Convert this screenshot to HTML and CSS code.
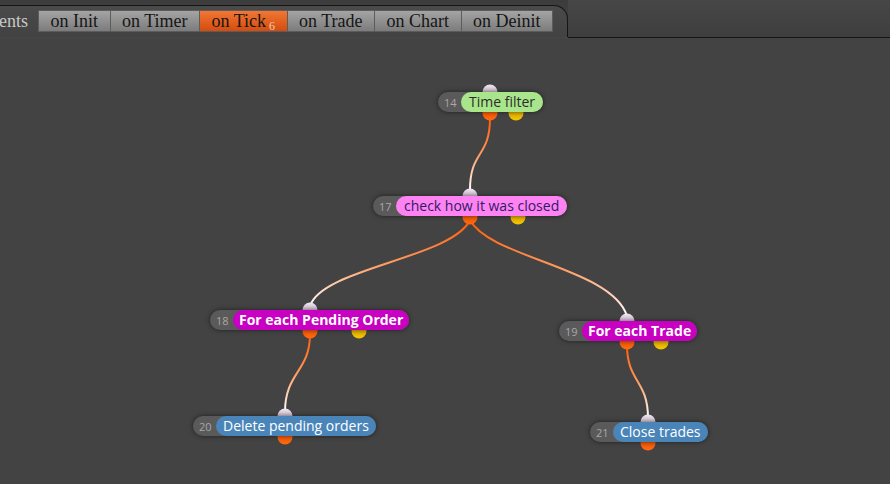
FILE: index.html
```html
<!DOCTYPE html>
<html>
	<head>
		<meta charset="utf-8">
		<title>Events</title>
		<link rel="stylesheet" href="styles.css">
	</head>
	<body>
		<div class="topbar">
			<div class="panel">
				<span class="caption">Events</span>
				<div class="tabs">
					<span class="tab">on Init</span>
					<span class="tab">on Timer</span>
					<span class="tab active">on Tick<sub>6</sub></span>
					<span class="tab">on Trade</span>
					<span class="tab">on Chart</span>
					<span class="tab">on Deinit</span>
				</div>
			</div>
			<div class="filler"></div>
		</div>
		<div class="canvas">
			<svg class="wires" width="890" height="446" viewBox="0 38 890 446">
				<defs>
					<linearGradient id="w1" gradientUnits="userSpaceOnUse" x1="0" y1="118" x2="0" y2="190">
						<stop offset="0" stop-color="#ff5a00"/>
						<stop offset="0.5" stop-color="#ff9a60"/>
						<stop offset="1" stop-color="#ffffff"/>
					</linearGradient>
					<linearGradient id="w2" gradientUnits="userSpaceOnUse" x1="0" y1="220" x2="0" y2="306">
						<stop offset="0" stop-color="#ff5a00"/>
						<stop offset="0.5" stop-color="#ff9a60"/>
						<stop offset="1" stop-color="#ffffff"/>
					</linearGradient>
					<linearGradient id="w3" gradientUnits="userSpaceOnUse" x1="0" y1="220" x2="0" y2="316">
						<stop offset="0" stop-color="#ff5a00"/>
						<stop offset="0.5" stop-color="#ff9a60"/>
						<stop offset="1" stop-color="#ffffff"/>
					</linearGradient>
					<linearGradient id="w4" gradientUnits="userSpaceOnUse" x1="0" y1="334" x2="0" y2="412">
						<stop offset="0" stop-color="#ff5a00"/>
						<stop offset="0.5" stop-color="#ff9a60"/>
						<stop offset="1" stop-color="#ffffff"/>
					</linearGradient>
					<linearGradient id="w5" gradientUnits="userSpaceOnUse" x1="0" y1="345" x2="0" y2="418">
						<stop offset="0" stop-color="#ff5a00"/>
						<stop offset="0.5" stop-color="#ff9a60"/>
						<stop offset="1" stop-color="#ffffff"/>
					</linearGradient>
					<linearGradient id="pin-in" x1="0" y1="0" x2="0" y2="1">
						<stop offset="0" stop-color="#f2e6f2"/>
						<stop offset="1" stop-color="#a898a8"/>
					</linearGradient>
					<linearGradient id="pin-out" x1="0" y1="0" x2="0" y2="1">
						<stop offset="0" stop-color="#e04a00"/>
						<stop offset="1" stop-color="#ff6a10"/>
					</linearGradient>
					<linearGradient id="pin-alt" x1="0" y1="0" x2="0" y2="1">
						<stop offset="0" stop-color="#c89000"/>
						<stop offset="1" stop-color="#f4c800"/>
					</linearGradient>
				</defs>

				<!-- connections -->
				<g fill="none" stroke-width="2">
					<path d="M490 118 C490 158 470 150 470 190" stroke="url(#w1)"/>
					<path d="M470 220 C452 258 322 268 310 306" stroke="url(#w2)"/>
					<path d="M470 220 C490 258 612 268 627 316" stroke="url(#w3)"/>
					<path d="M310 334 C310 372 285 372 285 412" stroke="url(#w4)"/>
					<path d="M627 345 C627 382 648 380 648 418" stroke="url(#w5)"/>
				</g>

				<!-- pins -->
				<circle cx="490" cy="92" r="7.5" fill="url(#pin-in)"/>
				<circle cx="490" cy="113" r="7.5" fill="url(#pin-out)"/>
				<circle cx="516" cy="113" r="7.5" fill="url(#pin-alt)"/>

				<circle cx="470" cy="196" r="7.5" fill="url(#pin-in)"/>
				<circle cx="470" cy="217" r="7.5" fill="url(#pin-out)"/>
				<circle cx="518" cy="217" r="7.5" fill="url(#pin-alt)"/>

				<circle cx="310" cy="310" r="7.5" fill="url(#pin-in)"/>
				<circle cx="310" cy="331" r="7.5" fill="url(#pin-out)"/>
				<circle cx="359" cy="331" r="7.5" fill="url(#pin-alt)"/>

				<circle cx="627" cy="321" r="7.5" fill="url(#pin-in)"/>
				<circle cx="627" cy="342" r="7.5" fill="url(#pin-out)"/>
				<circle cx="661" cy="342" r="7.5" fill="url(#pin-alt)"/>

				<circle cx="285" cy="416" r="7.5" fill="url(#pin-in)"/>
				<circle cx="285" cy="437" r="7.5" fill="url(#pin-out)"/>

				<circle cx="648" cy="422" r="7.5" fill="url(#pin-in)"/>
				<circle cx="648" cy="443" r="7.5" fill="url(#pin-out)"/>
			</svg>

			<div class="node n14"><span class="num">14</span><span class="label green">Time filter</span></div>
			<div class="node n17"><span class="num">17</span><span class="label pink">check how it was closed</span></div>
			<div class="node n18"><span class="num">18</span><span class="label loop">For each Pending Order</span></div>
			<div class="node n19"><span class="num">19</span><span class="label loop">For each Trade</span></div>
			<div class="node n20"><span class="num">20</span><span class="label action">Delete pending orders</span></div>
			<div class="node n21"><span class="num">21</span><span class="label action">Close trades</span></div>
		</div>
	</body>
</html>
```

FILE: styles.css
```css
html, body{
	margin: 0;
	padding: 0;
}
body{
	width: 890px;
	height: 484px;
	overflow: hidden;
	background: #434343;
	font-family: "Open Sans", "Noto Sans", sans-serif;
}
.topbar{
	display: flex;
	height: 38px;
	background: linear-gradient(#3c3c3c, #464646);
}
.panel{
	display: flex;
	align-items: flex-start;
	width: 568px;
	height: 32px;
	margin-top: 5px;
	padding-top: 4px;
	box-sizing: border-box;
	border-top: 1px solid #151515;
	border-right: 1px solid #151515;
	border-top-right-radius: 14px;
	background: linear-gradient(#4a4a4a, #424242);
	overflow: hidden;
}
.filler{
	flex: 1;
	border-bottom: 1px solid #151515;
	background: linear-gradient(#474747, #3e3e3e);
}
.caption{
	margin-left: -21px;
	width: 59px;
	flex: none;
	font-family: "Liberation Serif", serif;
	font-size: 18px;
	line-height: 22px;
	color: #c8c8c8;
}
.tabs{
	display: flex;
}
.tab{
	height: 22px;
	padding: 0 11.5px;
	box-sizing: border-box;
	border: 1px solid #5c5c5c;
	border-left: none;
	background: linear-gradient(#a4a4a4, #7c7c7c);
	font-family: "Liberation Serif", serif;
	font-size: 18px;
	line-height: 21px;
	color: #151515;
	white-space: nowrap;
}
.tab:first-child{
	border-left: 1px solid #5c5c5c;
}
.tab.active{
	background: linear-gradient(#f27634, #d44c0e);
}
.tab sub{
	font-size: 12px;
	color: #f5cfb0;
	margin-left: 3px;
	vertical-align: -3px;
}
.canvas{
	position: relative;
	height: 446px;
}
.wires{
	position: absolute;
	left: 0;
	top: 0;
}
.node{
	position: absolute;
	display: flex;
	align-items: center;
	height: 20px;
	border-radius: 10px;
	background: #5a5a5a;
	box-shadow: 0 0 5px rgba(0, 0, 0, 0.55);
}
.num{
	width: 23px;
	padding-left: 6px;
	box-sizing: border-box;
	font-size: 11px;
	color: #a8a8a8;
}
.label{
	height: 20px;
	padding: 0 6px;
	border-radius: 10px;
	font-size: 14px;
	line-height: 20px;
	white-space: nowrap;
}
.green{
	padding: 0 8px;
	background: #a9e58b;
	color: #2c2c2c;
}
.pink{
	padding: 0 8px;
	background: #ff82f2;
	color: #2a1d66;
}
.loop{
	background: #c800c2;
	color: #ffffff;
	font-weight: bold;
}
.action{
	padding: 0 7px;
	background: #4a85ba;
	color: #ffffff;
}
.n14{ left: 438px; top: 54px; }
.n17{ left: 373px; top: 158px; }
.n18{ left: 210px; top: 272px; }
.n19{ left: 559px; top: 283px; }
.n20{ left: 193px; top: 378px; }
.n21{ left: 590px; top: 384px; }
```
